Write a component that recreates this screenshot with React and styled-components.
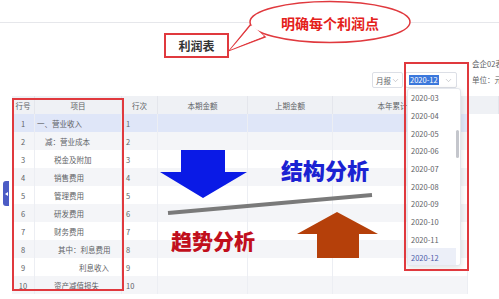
import React from "react"
import styled, { createGlobalStyle } from "styled-components"
import { ChevronDown } from "lucide-react"

const GlobalStyle = createGlobalStyle`
  html,
  body {
    margin: 0;
    padding: 0;
    background: #fff;
  }
  body {
    font-family: "Noto Sans CJK SC", "Noto Sans", sans-serif;
  }
`

const red = "#e0393e"
const cols = "23px 87px 36px 90px 85px 135px"

const Page = styled.div`
  position: relative;
  width: 499px;
  height: 299px;
  overflow: hidden;
  background: #fff;
  color: #606266;
`

const TopBar = styled.div`
  height: 22px;
  border-bottom: 1px solid #e6e7eb;
`

const Header = styled.div`
  display: flex;
  align-items: flex-start;
  height: 73px;
`

const TitleBox = styled.div`
  box-sizing: border-box;
  flex-shrink: 0;
  margin: 10px 0 0 164px;
  width: 65px;
  height: 25px;
  border: 2px solid ${red};
  display: flex;
  align-items: center;
  justify-content: center;
  font-size: 12px;
  font-weight: 700;
  color: #333;
`

const Controls = styled.div`
  flex-shrink: 0;
  margin: 49px 0 0 auto;
  display: flex;
  gap: 2px;
`

const Select = styled.div`
  box-sizing: border-box;
  flex-shrink: 0;
  width: ${props => props.$width}px;
  height: 16px;
  border: 1px solid #dcdfe6;
  border-radius: 2px;
  display: flex;
  align-items: center;
  justify-content: space-between;
  padding: 0 3px 0 3px;
  font-size: 7.5px;
  color: #606266;
  white-space: nowrap;
  svg {
    flex-shrink: 0;
    color: #a8abb2;
  }
`

const Picked = styled.span`
  background: #3b78dc;
  color: #fff;
  line-height: 10px;
  padding: 0 1px;
`

const Meta = styled.div`
  flex-shrink: 0;
  width: 27px;
  margin: 35px 0 0 15px;
  display: flex;
  flex-direction: column;
  gap: 4px;
  font-size: 7.5px;
  line-height: 12px;
  white-space: nowrap;
`

const Table = styled.div`
  margin-left: 12px;
`

const HeadRow = styled.div`
  display: grid;
  grid-template-columns: ${cols} 1fr;
  height: 18px;
  background: #eff1f5;
  font-size: 7.5px;
`

const HeadCell = styled.div`
  display: flex;
  align-items: center;
  justify-content: center;
  border-right: 1px solid #e4e6ec;
  white-space: nowrap;
  overflow: hidden;
`

const Row = styled.div`
  display: grid;
  grid-template-columns: ${cols};
  width: 456px;
  height: 18px;
  font-size: 7.5px;
  background: ${props =>
    props.$active ? "#dfe6f8" : props.$striped ? "#f4f5f8" : "#fff"};
`

const Cell = styled.div`
  display: flex;
  align-items: center;
  justify-content: ${props => (props.$center ? "center" : "flex-start")};
  padding-left: ${props => props.$indent || 0}px;
  border-right: 1px solid #eceef3;
  white-space: nowrap;
`

const Dropdown = styled.div`
  position: absolute;
  left: 407px;
  top: 88px;
  width: 54px;
  height: 178px;
  box-sizing: border-box;
  display: flex;
  background: #fff;
  border: 1px solid #e4e7ed;
  border-radius: 3px;
  box-shadow: 0 2px 6px rgba(0, 0, 0, 0.12);
  overflow: hidden;
`

const Options = styled.div`
  flex: 1;
`

const Option = styled.div`
  height: 17.7px;
  display: flex;
  align-items: center;
  padding-left: 3px;
  font-size: 7.5px;
  color: ${props => (props.$selected ? "#4a5aa8" : "#606266")};
  background: ${props => (props.$selected ? "#eceff8" : "transparent")};
`

const Track = styled.div`
  width: 4px;
  padding-top: 41px;
`

const Thumb = styled.div`
  width: 3px;
  height: 28px;
  border-radius: 2px;
  background: #c4c6cc;
`

const Frame = styled.div`
  position: absolute;
  box-sizing: border-box;
  border: 2px solid ${red};
  pointer-events: none;
`

const ItemsFrame = styled(Frame)`
  left: 12px;
  top: 98px;
  width: 112px;
  height: 193px;
`

const DateFrame = styled(Frame)`
  left: 404px;
  top: 62px;
  width: 65px;
  height: 209px;
`

const SideTab = styled.div`
  position: absolute;
  left: 3px;
  top: 181px;
  width: 6px;
  height: 25px;
  border-radius: 3px 0 0 3px;
  background: #4c5cc5;
  display: flex;
  align-items: center;
  justify-content: center;
  &::after {
    content: "";
    border-right: 3px solid #fff;
    border-top: 2.5px solid transparent;
    border-bottom: 2.5px solid transparent;
  }
`

const Bubble = styled.svg`
  position: absolute;
  left: 225px;
  top: 0;
  pointer-events: none;
`

const BubbleText = styled.div`
  position: absolute;
  left: 250px;
  top: 13px;
  width: 160px;
  text-align: center;
  font-size: 14px;
  line-height: 20px;
  font-weight: 700;
  color: #e4211b;
`

const Diagram = styled.svg`
  position: absolute;
  left: 0;
  top: 0;
  pointer-events: none;
`

const Label = styled.div`
  position: absolute;
  font-weight: 900;
  line-height: 26px;
  white-space: nowrap;
`

const StructureLabel = styled(Label)`
  left: 281px;
  top: 156px;
  font-size: 22px;
  color: #1b22d2;
`

const TrendLabel = styled(Label)`
  left: 171px;
  top: 227px;
  font-size: 21px;
  color: #c10f1c;
`

const rows = [
  { no: 1, name: "一、营业收入", indent: 2 },
  { no: 2, name: "减：营业成本", indent: 10 },
  { no: 3, name: "税金及附加", indent: 19 },
  { no: 4, name: "销售费用", indent: 19 },
  { no: 5, name: "管理费用", indent: 19 },
  { no: 6, name: "研发费用", indent: 19 },
  { no: 7, name: "财务费用", indent: 19 },
  { no: 8, name: "其中：利息费用", indent: 23 },
  { no: 9, name: "利息收入", indent: 44 },
  { no: 10, name: "资产减值损失", indent: 19 }
]

const months = ["03", "04", "05", "06", "07", "08", "09", "10", "11", "12"]

export default function App() {
  return (
    <Page>
      <GlobalStyle />
      <TopBar />
      <Header>
        <TitleBox>利润表</TitleBox>
        <Controls>
          <Select $width={31}>
            月报
            <ChevronDown size={9} strokeWidth={1.5} />
          </Select>
          <Select $width={52}>
            <Picked>2020-12</Picked>
            <ChevronDown size={9} strokeWidth={1.5} />
          </Select>
        </Controls>
        <Meta>
          <span>会企02表</span>
          <span>单位：元</span>
        </Meta>
      </Header>

      <Table>
        <HeadRow>
          <HeadCell>行号</HeadCell>
          <HeadCell>项目</HeadCell>
          <HeadCell>行次</HeadCell>
          <HeadCell>本期金额</HeadCell>
          <HeadCell>上期金额</HeadCell>
          <HeadCell>本年累计金额</HeadCell>
          <HeadCell />
        </HeadRow>
        {rows.map(r => (
          <Row key={r.no} $active={r.no === 1} $striped={r.no % 2 === 0}>
            <Cell $center>{r.no}</Cell>
            <Cell $indent={r.indent}>{r.name}</Cell>
            <Cell $indent={4}>{r.no}</Cell>
            <Cell />
            <Cell />
            <Cell />
          </Row>
        ))}
      </Table>

      <Diagram width="499" height="299">
        <polygon
          points="181,150 225,150 225,172 247,172 203,198 160,172 181,172"
          fill="#0a1ae6"
        />
        <line x1="168" y1="213" x2="372" y2="195" stroke="#7a7a7a" strokeWidth="4" />
        <polygon
          points="337,212 378,234 359,234 359,258 317,258 317,234 297,234"
          fill="#b5400a"
        />
      </Diagram>
      <StructureLabel>结构分析</StructureLabel>
      <TrendLabel>趋势分析</TrendLabel>

      <Dropdown>
        <Options>
          {months.map(m => (
            <Option key={m} $selected={m === "12"}>
              2020-{m}
            </Option>
          ))}
        </Options>
        <Track>
          <Thumb />
        </Track>
      </Dropdown>

      <ItemsFrame />
      <DateFrame />
      <SideTab />

      <Bubble width="195" height="60">
        <polygon points="5,50 26,24 40,37" fill="#fff" stroke={red} strokeWidth="1.5" />
        <ellipse cx="105" cy="22" rx="80" ry="20.5" fill="#fff" stroke={red} strokeWidth="1.5" />
        <polygon points="5,50 27,25 39,36" fill="#fff" />
      </Bubble>
      <BubbleText>明确每个利润点</BubbleText>
    </Page>
  )
}
